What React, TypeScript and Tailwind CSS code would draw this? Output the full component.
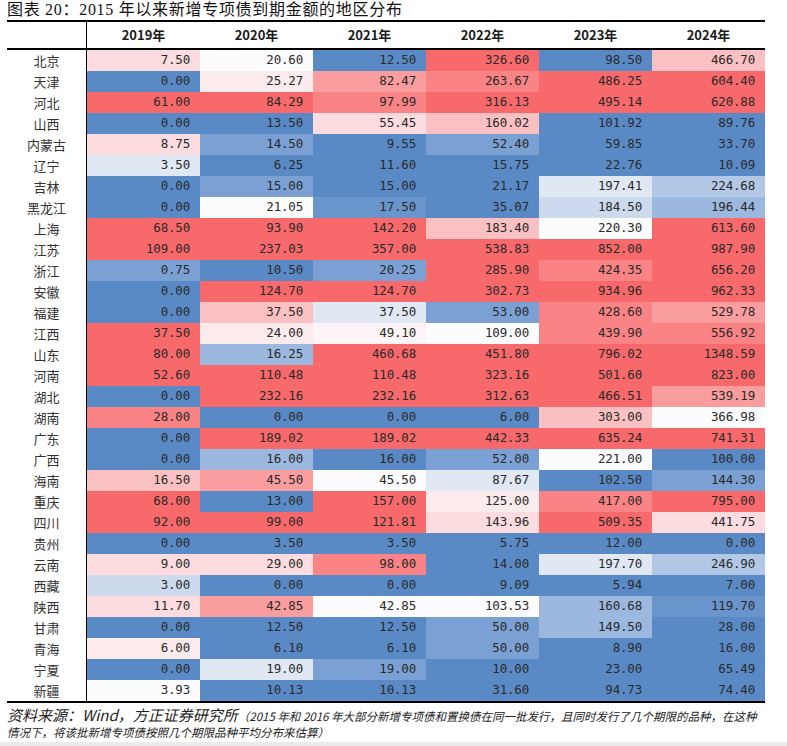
import React from "react";

const bg: Record<string, string> = {
  R: "bg-[#f8696b]",
  R1: "bg-[#f98385]",
  R2: "bg-[#f99d9f]",
  R3: "bg-[#fbc0c2]",
  R4: "bg-[#fcdcde]",
  R5: "bg-[#fcebed]",
  P: "bg-[#fcf4f7]",
  W: "bg-[#fcfcff]",
  B5: "bg-[#e0e8f4]",
  B4: "bg-[#cddaed]",
  B3: "bg-[#b3c8e6]",
  B2: "bg-[#9cb8de]",
  B1: "bg-[#7ba0d3]",
  B0: "bg-[#6a95cc]",
  B: "bg-[#5a8ac6]",
};

const years = ["2019", "2020", "2021", "2022", "2023", "2024"];

// name, values, colour levels per year
const rows: [string, string[], string[]][] = [
  ["北京", ["7.50", "20.60", "12.50", "326.60", "98.50", "466.70"], ["R4", "W", "B", "R", "B", "R3"]],
  ["天津", ["0.00", "25.27", "82.47", "263.67", "486.25", "604.40"], ["B", "R5", "R2", "R1", "R", "R"]],
  ["河北", ["61.00", "84.29", "97.99", "316.13", "495.14", "620.88"], ["R", "R", "R1", "R", "R", "R"]],
  ["山西", ["0.00", "13.50", "55.45", "160.02", "101.92", "89.76"], ["B", "B", "R4", "R3", "B", "B"]],
  ["内蒙古", ["8.75", "14.50", "9.55", "52.40", "59.85", "33.70"], ["R4", "B1", "B", "B1", "B", "B"]],
  ["辽宁", ["3.50", "6.25", "11.60", "15.75", "22.76", "10.09"], ["B5", "B", "B", "B", "B", "B"]],
  ["吉林", ["0.00", "15.00", "15.00", "21.17", "197.41", "224.68"], ["B", "B1", "B", "B", "B5", "B3"]],
  ["黑龙江", ["0.00", "21.05", "17.50", "35.07", "184.50", "196.44"], ["B", "W", "B0", "B", "B4", "B2"]],
  ["上海", ["68.50", "93.90", "142.20", "183.40", "220.30", "613.60"], ["R", "R", "R", "R3", "W", "R"]],
  ["江苏", ["109.00", "237.03", "357.00", "538.83", "852.00", "987.90"], ["R", "R", "R", "R", "R", "R"]],
  ["浙江", ["0.75", "10.50", "20.25", "285.90", "424.35", "656.20"], ["B1", "B", "B1", "R", "R1", "R"]],
  ["安徽", ["0.00", "124.70", "124.70", "302.73", "934.96", "962.33"], ["B", "R", "R", "R", "R", "R"]],
  ["福建", ["0.00", "37.50", "37.50", "53.00", "428.60", "529.78"], ["B", "R3", "B5", "B1", "R1", "R2"]],
  ["江西", ["37.50", "24.00", "49.10", "109.00", "439.90", "556.92"], ["R", "R5", "P", "W", "R1", "R1"]],
  ["山东", ["80.00", "16.25", "460.68", "451.80", "796.02", "1348.59"], ["R", "B2", "R", "R", "R", "R"]],
  ["河南", ["52.60", "110.48", "110.48", "323.16", "501.60", "823.00"], ["R", "R", "R", "R", "R", "R"]],
  ["湖北", ["0.00", "232.16", "232.16", "312.63", "466.51", "539.19"], ["B", "R", "R", "R", "R", "R2"]],
  ["湖南", ["28.00", "0.00", "0.00", "6.00", "303.00", "366.98"], ["R1", "B", "B", "B", "R3", "W"]],
  ["广东", ["0.00", "189.02", "189.02", "442.33", "635.24", "741.31"], ["B", "R", "R", "R", "R", "R"]],
  ["广西", ["0.00", "16.00", "16.00", "52.00", "221.00", "100.00"], ["B", "B2", "B", "B1", "W", "B"]],
  ["海南", ["16.50", "45.50", "45.50", "87.67", "102.50", "144.30"], ["R3", "R2", "W", "B5", "B", "B1"]],
  ["重庆", ["68.00", "13.00", "157.00", "125.00", "417.00", "795.00"], ["R", "B", "R", "R5", "R1", "R"]],
  ["四川", ["92.00", "99.00", "121.81", "143.96", "509.35", "441.75"], ["R", "R", "R", "R4", "R", "R4"]],
  ["贵州", ["0.00", "3.50", "3.50", "5.75", "12.00", "0.00"], ["B", "B", "B", "B", "B", "B"]],
  ["云南", ["9.00", "29.00", "98.00", "14.00", "197.70", "246.90"], ["R4", "R4", "R1", "B", "B5", "B3"]],
  ["西藏", ["3.00", "0.00", "0.00", "9.09", "5.94", "7.00"], ["B4", "B", "B", "B", "B", "B"]],
  ["陕西", ["11.70", "42.85", "42.85", "103.53", "160.68", "119.70"], ["R4", "R2", "W", "W", "B2", "B0"]],
  ["甘肃", ["0.00", "12.50", "12.50", "50.00", "149.50", "28.00"], ["B", "B", "B", "B1", "B2", "B"]],
  ["青海", ["6.00", "6.10", "6.10", "50.00", "8.90", "16.00"], ["R5", "B", "B", "B1", "B", "B"]],
  ["宁夏", ["0.00", "19.00", "19.00", "10.00", "23.00", "65.49"], ["B", "B5", "B1", "B", "B", "B"]],
  ["新疆", ["3.93", "10.13", "10.13", "31.60", "94.73", "74.40"], ["W", "B", "B", "B", "B", "B"]],
];

const cjk = "font-['Noto_Sans_CJK_SC',sans-serif]";
const num = "font-['DejaVu_Sans_Mono','Liberation_Mono',monospace]";

export default function App() {
  return (
    <div className="w-[787px] h-[746px] bg-white flex flex-col text-[#1a1a1a]">
      <div className="h-[20px] pl-[7px] flex items-center text-[16px] tracking-[0.7px] leading-[20px] font-['Liberation_Serif','Noto_Sans_CJK_SC',serif] text-[#111] whitespace-nowrap">
        图表 20：2015 年以来新增专项债到期金额的地区分布
      </div>

      <div className="ml-[7px] w-[758px] border-t-2 border-b-2 border-black">
        <div className="grid grid-cols-[80px_repeat(6,113px)] h-[28px] border-b-2 border-black">
          <div className="border-r border-black" />
          {years.map((y) => (
            <div key={y} className={`flex items-center justify-center text-[13px] font-bold ${cjk}`}>
              {y}年
            </div>
          ))}
        </div>
        {rows.map(([name, vals, cols]) => (
          <div key={name} className="grid grid-cols-[80px_repeat(6,113px)] h-[21px]">
            <div className={`border-r border-black flex items-center justify-center text-[13px] text-[#333] ${cjk}`}>
              {name}
            </div>
            {vals.map((v, i) => (
              <div
                key={i}
                className={`${bg[cols[i]]} flex items-center justify-end pr-[10px] text-[12.5px] tracking-[-0.2px] text-[#2a2a2a] ${num}`}
              >
                {v}
              </div>
            ))}
          </div>
        ))}
      </div>

      <div className={`flex-1 pl-[7px] pt-[3px] italic text-[#222] leading-[16px] ${cjk}`}>
        <div className="whitespace-nowrap">
          <span className="text-[15px]">资料来源：Wind，方正证券研究所</span>
          <span className="text-[11.5px]">
            （2015 年和 2016 年大部分新增专项债和置换债在同一批发行，且同时发行了几个期限的品种，在这种
          </span>
        </div>
        <div className="whitespace-nowrap text-[11.5px]">
          情况下，将该批新增专项债按照几个期限品种平均分布来估算）
        </div>
      </div>
      <div className="h-[4px] bg-[#ebebeb]" />
    </div>
  );
}
